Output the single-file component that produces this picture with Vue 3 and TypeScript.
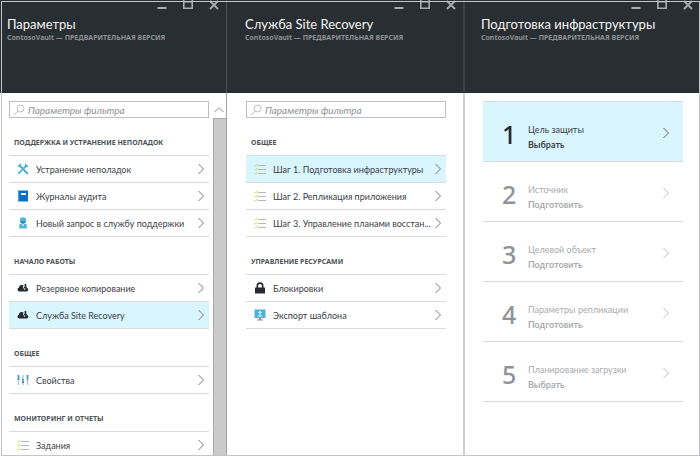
<script setup lang="ts">
import { ref } from 'vue'

type IconName = 'tools' | 'book' | 'person' | 'cloud' | 'sliders' | 'checklist' | 'lock' | 'monitor'

interface MenuItem {
  label: string
  icon: IconName
  selected?: boolean
}

interface MenuGroup {
  title: string
  items: MenuItem[]
}

interface MenuBlade {
  id: string
  title: string
  scrollable: boolean
  groups: MenuGroup[]
}

interface Step {
  name: string
  action: string
}

const subtitle = 'ContosoVault — ПРЕДВАРИТЕЛЬНАЯ ВЕРСИЯ'

const blades: MenuBlade[] = [
  {
    id: 'settings',
    title: 'Параметры',
    scrollable: true,
    groups: [
      {
        title: 'ПОДДЕРЖКА И УСТРАНЕНИЕ НЕПОЛАДОК',
        items: [
          { label: 'Устранение неполадок', icon: 'tools' },
          { label: 'Журналы аудита', icon: 'book' },
          { label: 'Новый запрос в службу поддержки', icon: 'person' },
        ],
      },
      {
        title: 'НАЧАЛО РАБОТЫ',
        items: [
          { label: 'Резервное копирование', icon: 'cloud' },
          { label: 'Служба Site Recovery', icon: 'cloud', selected: true },
        ],
      },
      { title: 'ОБЩЕЕ', items: [{ label: 'Свойства', icon: 'sliders' }] },
      { title: 'МОНИТОРИНГ И ОТЧЕТЫ', items: [{ label: 'Задания', icon: 'checklist' }] },
    ],
  },
  {
    id: 'recovery',
    title: 'Служба Site Recovery',
    scrollable: false,
    groups: [
      {
        title: 'ОБЩЕЕ',
        items: [
          { label: 'Шаг 1. Подготовка инфраструктуры', icon: 'checklist', selected: true },
          { label: 'Шаг 2. Репликация приложения', icon: 'checklist' },
          { label: 'Шаг 3. Управление планами восстан...', icon: 'checklist' },
        ],
      },
      {
        title: 'УПРАВЛЕНИЕ РЕСУРСАМИ',
        items: [
          { label: 'Блокировки', icon: 'lock' },
          { label: 'Экспорт шаблона', icon: 'monitor' },
        ],
      },
    ],
  },
]

const steps: Step[] = [
  { name: 'Цель защиты', action: 'Выбрать' },
  { name: 'Источник', action: 'Подготовить' },
  { name: 'Целевой объект', action: 'Подготовить' },
  { name: 'Параметры репликации', action: 'Подготовить' },
  { name: 'Планирование загрузки', action: 'Выбрать' },
]

const headers = [...blades.map((b) => b.title), 'Подготовка инфраструктуры']
const filters = ref<Record<string, string>>({ settings: '', recovery: '' })
const currentStep = ref(0)
</script>

<template>
  <main class="portal">
    <header v-for="title in headers" :key="title" class="blade-header">
      <div class="controls">
        <button type="button" aria-label="Свернуть">
          <svg viewBox="0 0 10 10"><path d="M0.500 8h9" stroke-width="2" /></svg>
        </button>
        <button type="button" aria-label="Развернуть">
          <svg viewBox="0 0 10 10"><path d="M0.800 0v8.200h8.400V0M0.800 1.800h8.400" stroke-width="1.600" /></svg>
        </button>
        <button type="button" aria-label="Закрыть">
          <svg viewBox="0 0 10 10"><path d="M1 1l8 8M9 1l-8 8" stroke-width="1.800" /></svg>
        </button>
      </div>
      <h1>{{ title }}</h1>
      <p>{{ subtitle }}</p>
    </header>

    <section v-for="blade in blades" :key="blade.id" class="blade" :class="{ scrollable: blade.scrollable }">
      <div class="content">
        <label class="filter">
          <svg class="magnifier" viewBox="0 0 12 12">
            <circle cx="7.500" cy="4.500" r="3.500" />
            <path d="M5 7L1 11" />
          </svg>
          <input v-model="filters[blade.id]" type="text" placeholder="Параметры фильтра" aria-label="Параметры фильтра" />
        </label>

        <template v-for="group in blade.groups" :key="group.title">
          <h2>{{ group.title }}</h2>
          <ul>
            <li v-for="item in group.items" :key="item.label">
              <button type="button" class="item" :class="{ selected: item.selected }">
                <svg class="icon" viewBox="0 0 12 12">
                  <g v-if="item.icon === 'tools'" fill="none" stroke="#3fa9d6">
                    <path d="M3 3l7.800 7.800" stroke-width="1.800" />
                    <path d="M0.800 2.800l2.200 0.400L3.200 0.800" stroke-width="1.400" />
                    <path d="M8.800 0.800L8.500 3.500l2.700-0.300" stroke-width="1.500" />
                    <path d="M8.500 3.500L1.200 10.800" stroke-width="1.800" stroke="#59b4d9" />
                  </g>
                  <g v-else-if="item.icon === 'book'">
                    <path d="M1 0.500h10v11H2a1 1 0 0 1-1-1z" fill="#0072c6" />
                    <path d="M1 0.500h1.200v10H1z" fill="#4a9fdc" />
                    <path d="M4 3h5v2H4z" fill="#fff" />
                  </g>
                  <g v-else-if="item.icon === 'person'">
                    <path d="M2.500 7h7l0.500 4.500H2z" fill="#59b4d9" />
                    <circle cx="6" cy="3.500" r="3.300" fill="#59b4d9" />
                    <path d="M3.600 4.300a2.400 2.400 0 0 0 4.800 0z" fill="#2384ad" />
                    <path d="M4.800 7.200L6 9l1.200-1.800z" fill="#fff" />
                  </g>
                  <g v-else-if="item.icon === 'cloud'" fill="#252b30">
                    <path d="M2.200 9.500a2 2 0 0 1-0.200-3.900A2.700 2.700 0 0 1 6.700 3.800L5.800 5 7.500 8 9.800 5.700A2 2 0 0 1 10 9.500z" />
                    <path d="M7.600 2h1.700v3h1L8.300 7.400 6.600 5h1z" />
                  </g>
                  <g v-else-if="item.icon === 'sliders'">
                    <path d="M1.500 1v10M6 1v10M10.500 1v10" stroke="#a9c9d8" stroke-width="1.400" />
                    <path d="M1.500 1v4M6 5v4M10.500 1v3" stroke="#3d9cc9" stroke-width="1.600" />
                    <path d="M0.500 5.500h2M5 8.500h2M9.500 5h2" stroke="#5b7f94" />
                  </g>
                  <g v-else-if="item.icon === 'checklist'" fill="none">
                    <path d="M4 2.500h8M4 6.500h8M4 10.500h8" stroke="#b5babd" />
                    <path d="M0.500 2.200l1 1L3.300 1M0.500 6.200l1 1L3.300 5M0.500 10.200l1 1L3.300 9" stroke="#c3db50" />
                  </g>
                  <g v-else-if="item.icon === 'lock'">
                    <path d="M3.300 6V3.800a2.700 2.700 0 0 1 5.400 0V6" fill="none" stroke="#252b30" stroke-width="1.600" />
                    <rect x="1" y="5.500" width="10" height="6" rx="0.500" fill="#252b30" />
                  </g>
                  <g v-else>
                    <path d="M0.500 0.500h11v8.500h-11z" fill="#4db1dc" />
                    <path d="M5 9h2v1.500h2v1H3v-1h2z" fill="#8d9599" />
                    <path d="M6 2v4M4.300 4L6 2.300 7.700 4M4 7h4" fill="none" stroke="#fff" />
                  </g>
                </svg>
                <span>{{ item.label }}</span>
                <svg class="chevron" viewBox="0 0 8 12"><path d="M1.500 1L6.500 6l-5 5" /></svg>
              </button>
            </li>
          </ul>
        </template>
      </div>
      <div v-if="blade.scrollable" class="scrollbar" aria-hidden="true">
        <svg viewBox="0 0 12 8"><path d="M1.500 6.500L6 2.500l4.500 4" /></svg>
        <div class="thumb"></div>
      </div>
    </section>

    <section class="blade">
      <ol class="content steps">
        <li v-for="(step, index) in steps" :key="step.name">
          <button
            type="button"
            class="step"
            :class="{ current: index === currentStep }"
            @click="currentStep = index"
          >
            <span class="number">{{ index + 1 }}</span>
            <span class="text">
              <span>{{ step.name }}</span>
              <strong>{{ step.action }}</strong>
            </span>
            <svg class="chevron" viewBox="0 0 8 12"><path d="M1.500 1L6.500 6l-5 5" /></svg>
          </button>
        </li>
      </ol>
    </section>
    <div class="frame" aria-hidden="true"></div>
  </main>
</template>

<style>
body {
  margin: 0;
  overflow: hidden;
}
</style>

<style scoped>
.portal {
  position: relative;
  display: grid;
  grid-template-columns: 227fr 238fr 235fr;
  grid-template-rows: auto 1fr;
  height: 100vh;
  overflow: hidden;
  background: #fff;
  color: #3c4146;
  font-family: Lato, 'Noto Sans', sans-serif;
  font-size: 9px;
  line-height: 14px;
}

.portal * {
  box-sizing: border-box;
}

.frame {
  position: absolute;
  inset: 1px 0 0 1px;
  border: 1px solid #c3c5c7;
  pointer-events: none;
}

h1,
h2,
p,
ul,
ol {
  margin: 0;
  padding: 0;
  list-style: none;
}

button {
  padding: 0;
  border: 0;
  background: none;
  color: inherit;
  font: inherit;
  text-align: left;
  cursor: pointer;
}

svg {
  display: block;
  flex: none;
}

.blade-header {
  height: 93px;
  padding-left: 18px;
  background: #292e32;
  border-right: 1px solid #4b5053;
}

.blade-header:first-child {
  padding-left: 7px;
}

.blade-header:nth-child(2) {
  border-right: 2px solid #3b4043;
}

.blade-header:nth-child(3) {
  padding-left: 16px;
  border-right: 0;
}

.controls {
  display: flex;
  justify-content: flex-end;
  gap: 16px;
  height: 16px;
  padding-right: 7px;
}

.controls svg {
  width: 10px;
  height: 10px;
  fill: none;
  stroke: #a9acae;
}

.controls button {
  height: 10px;
}

h1 {
  color: #f4f5f5;
  font-size: 13px;
  font-weight: 400;
  line-height: 16px;
  white-space: nowrap;
}

.blade-header p {
  color: #8e9193;
  font-family: 'Noto Sans', sans-serif;
  font-size: 7px;
  font-weight: 700;
  line-height: 12px;
  white-space: nowrap;
}

.blade {
  display: flex;
  min-height: 0;
  padding: 8px 17px 0 19px;
  border-right: 2px solid #cfcfcf;
  overflow: hidden;
}

.blade.scrollable {
  gap: 4px;
  padding: 8px 0 0 9px;
  border-right: 1px solid #a2a2a2;
}

.blade:nth-of-type(3) {
  padding: 8px 17px 0 18px;
  border-right: 0;
}

.content {
  flex: 1;
  min-width: 0;
}

.filter {
  display: flex;
  align-items: center;
  gap: 3px;
  height: 17px;
  padding-left: 3px;
  border: 1px solid #bcbec0;
}

.magnifier {
  width: 12px;
  height: 12px;
  fill: none;
  stroke: #bfc1c3;
}

.filter input {
  flex: 1;
  min-width: 0;
  padding: 1px 0 0;
  border: 0;
  outline: 0;
  background: none;
  color: #3c4146;
  font: inherit;
  font-size: 10px;
  font-style: italic;
}

.filter input::placeholder {
  color: #8f9396;
  opacity: 1;
}

h2 {
  height: 37px;
  padding: 18px 0 0 5px;
  color: #4d5358;
  font-family: 'Noto Sans', sans-serif;
  font-size: 7px;
  font-weight: 700;
  line-height: 14px;
  white-space: nowrap;
}

ul,
.steps {
  border-top: 1px solid #d8dadb;
}

.item {
  display: flex;
  align-items: center;
  width: 100%;
  height: 27px;
  padding: 0 4px 0 8px;
  border-bottom: 1px solid #d8dadb;
}

.item span {
  flex: 1;
  min-width: 0;
  padding: 1px 0 0 7px;
  white-space: nowrap;
}

.selected,
.current {
  background: #d9f5fe;
}

.icon {
  width: 12px;
  height: 12px;
}

.chevron {
  width: 8px;
  height: 12px;
  fill: none;
  stroke: #74797d;
}

.scrollbar {
  display: flex;
  flex-direction: column;
  width: 13px;
}

.scrollbar svg {
  width: 12px;
  height: 17px;
  fill: none;
  stroke: #c0c2c4;
  stroke-width: 1.600;
}

.thumb {
  flex: 1;
  border: 1px solid #a8a8a8;
  border-width: 1px 0 0 1px;
  background: #cacaca;
}

.step {
  display: flex;
  align-items: center;
  width: 100%;
  height: 60px;
  padding: 2px 13px 0 19px;
  border-bottom: 1px solid #d8dadb;
  color: #a9acae;
}

.step.current {
  color: #3c4146;
}

.number {
  width: 26px;
  padding-top: 2px;
  color: #909396;
  font-family: 'Noto Sans', sans-serif;
  font-size: 25px;
  font-weight: 500;
  line-height: 30px;
}

.current .number {
  color: #252b30;
}

.text {
  display: flex;
  flex: 1;
  flex-direction: column;
  padding-top: 8px;
  line-height: 15px;
}

.text strong {
  font-weight: 700;
}

.step .chevron {
  stroke: #b9bcbe;
}

.step.current .chevron {
  stroke: #5f656a;
}
</style>
